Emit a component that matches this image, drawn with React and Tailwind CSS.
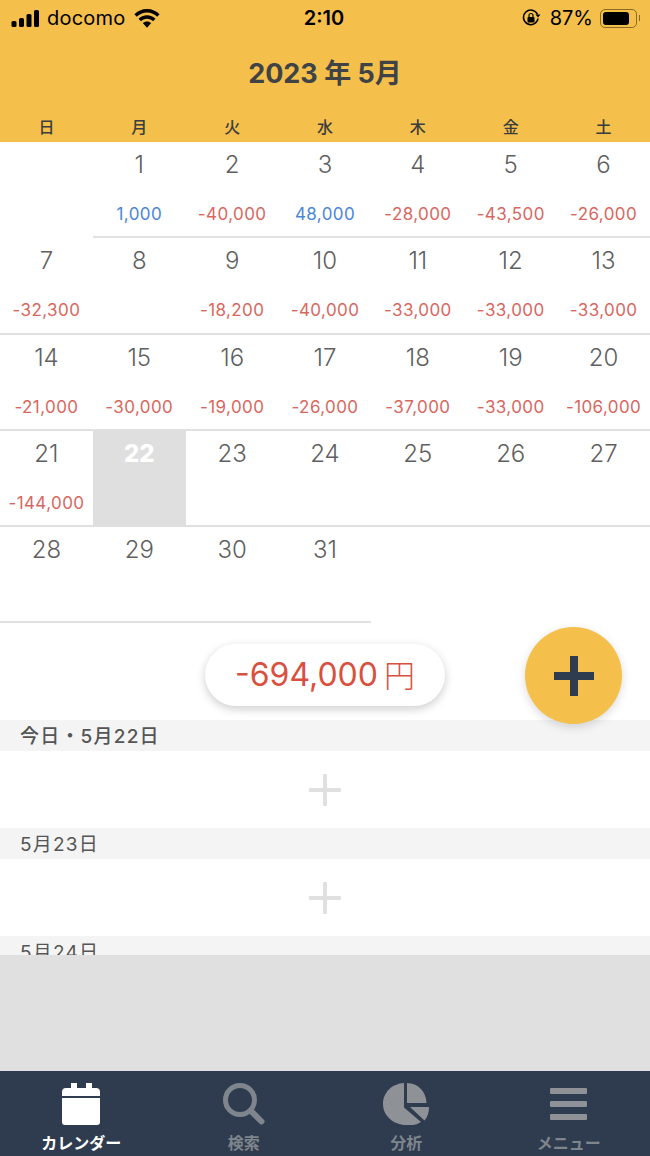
import React from 'react';

const weekdays = ['日', '月', '火', '水', '木', '金', '土'];

// null = blank cell, otherwise [day, amount]
const cells = [
  null, [1, '1,000'], [2, '-40,000'], [3, '48,000'], [4, '-28,000'], [5, '-43,500'], [6, '-26,000'],
  [7, '-32,300'], [8, ''], [9, '-18,200'], [10, '-40,000'], [11, '-33,000'], [12, '-33,000'], [13, '-33,000'],
  [14, '-21,000'], [15, '-30,000'], [16, '-19,000'], [17, '-26,000'], [18, '-37,000'], [19, '-33,000'], [20, '-106,000'],
  [21, '-144,000'], [22, ''], [23, ''], [24, ''], [25, ''], [26, ''], [27, ''],
  [28, ''], [29, ''], [30, ''], [31, ''], null, null, null,
];

const cjk = "font-['Inter','Noto_Sans_CJK_JP',sans-serif]";

function StatusBar() {
  return (
    <div className="flex h-[36px] items-center justify-between pl-[11px] pr-[10px] text-black">
      <div className="flex w-[200px] items-center">
        <svg width="30" height="18" viewBox="0 0 30 18" fill="currentColor">
          <rect x="0.5" y="12" width="5" height="6" rx="1.5" />
          <rect x="8" y="9" width="5" height="9" rx="1.5" />
          <rect x="15.5" y="5" width="5" height="13" rx="1.5" />
          <rect x="23" y="1" width="5" height="17" rx="1.5" />
        </svg>
        <span className="ml-[6px] text-[20px] leading-none tracking-[0.2px]">docomo</span>
        <svg className="ml-[9px]" width="26" height="19" viewBox="0 0 26 19" fill="currentColor">
          <path d="M13 0C8 0 3.6 2 .4 5.2l2.4 2.6C5.4 5.200 9 3.600 13 3.600s7.600 1.600 10.200 4.200l2.400-2.600C22.400 2 18 0 13 0z" />
          <path d="M13 6.200c-3.300 0-6.300 1.300-8.500 3.500l2.500 2.600c1.500-1.500 3.600-2.500 6-2.500s4.500 1 6 2.500l2.500-2.600c-2.200-2.200-5.200-3.500-8.500-3.500z" />
          <path d="M13 12.400c-1.700 0-3.100.7-4.200 1.700L13 18.800l4.200-4.700c-1.100-1-2.500-1.700-4.200-1.700z" />
        </svg>
      </div>
      <span className="-ml-[3px] text-[20px] font-semibold leading-none">2:10</span>
      <div className="flex w-[200px] items-center justify-end">
        <svg width="19" height="18" viewBox="0 0 19 18" fill="none">
          <path d="M15.500 5.500A7.300 7.300 0 1 0 16 9.500" stroke="currentColor" strokeWidth="1.600" />
          <path d="M13.500 5.500h5l-2.500 3z" fill="currentColor" />
          <rect x="5.500" y="8" width="7" height="5.500" rx="1" fill="currentColor" />
          <path d="M7 8V6.500a2 2 0 0 1 4 0V8" stroke="currentColor" strokeWidth="1.200" />
        </svg>
        <span className="ml-[9px] text-[20px] leading-none">87%</span>
        <div className="ml-[7px] flex h-[19px] w-[37px] items-center rounded-[5px] border border-[#8a6d22] p-[2px]">
          <div className="h-full w-[85%] rounded-[3px] bg-black" />
        </div>
        <div className="ml-[2px] h-[6px] w-[1px] bg-[#8a6d22]" />
      </div>
    </div>
  );
}

function DayCell({ cell }) {
  if (!cell) {
    return <div className="h-[96.300px]" />;
  }
  const [day, amount] = cell;
  const today = day === 22;
  const blue = amount !== '' && !amount.startsWith('-');
  return (
    <div className={`flex h-[96.300px] flex-col items-center border-b-2 border-[#e0e0e0] ${today ? 'bg-[#dfdfdf]' : ''}`}>
      <span className={`mt-[8px] h-[30px] text-[24px] leading-[30px] ${today ? 'font-extrabold text-white' : 'font-light text-[#5f5f5f]'}`}>{day}</span>
      <span className={`mt-[24px] whitespace-nowrap text-[17px] leading-[20px] tracking-[0.4px] ${blue ? 'text-[#4a86d6]' : 'text-[#d8675f]'}`}>{amount}</span>
    </div>
  );
}

function DayHeader({ label, bold }) {
  return (
    <div className={`flex h-[31px] shrink-0 items-center bg-[#f4f4f4] pl-[20px] pt-[3px] text-[19px] leading-none tracking-[1.2px] text-[#555555] ${bold ? 'font-medium' : ''}`}>
      {label}
    </div>
  );
}

function AddRow() {
  return (
    <div className="flex h-[77px] shrink-0 items-center justify-center bg-white pt-[1px]">
      <svg width="32" height="32" viewBox="0 0 32 32" fill="#e0e0e0">
        <rect x="14" y="0" width="4" height="32" rx="1" />
        <rect x="0" y="14" width="32" height="4" rx="1" />
      </svg>
    </div>
  );
}

function Tab({ label, active, children }) {
  return (
    <div className="flex flex-col items-center">
      <div className="mt-[12px] flex h-[42px] items-center justify-center">{children}</div>
      <span className={`mt-[8px] text-[16px] font-bold leading-[20px] ${active ? 'text-white' : 'text-[#7f858c]'}`}>{label}</span>
    </div>
  );
}

export default function App() {
  return (
    <div className={`relative flex h-[1156px] w-[650px] flex-col overflow-hidden bg-[#e0e0e0] ${cjk}`}>
      {/* Header */}
      <header className="h-[142px] shrink-0 bg-[#f5bf4b]">
        <StatusBar />
        <h1 className="mt-[19px] text-center text-[27px] font-bold leading-[38px] text-[#3f4346]">2023 年 5月</h1>
        <div className="mt-[22px] grid grid-cols-7">
          {weekdays.map((d) => (
            <span key={d} className="text-center text-[16px] font-medium leading-[24px] text-[#3a3d3f]">{d}</span>
          ))}
        </div>
      </header>

      {/* Calendar + list, clipped above the grey block */}
      <div className="h-[813px] shrink-0 overflow-hidden bg-white">
        <div className="grid grid-cols-7">
          {cells.map((c, i) => (
            <DayCell key={i} cell={c} />
          ))}
        </div>
        <div className="flex h-[96.500px] items-start justify-center pt-[21px]">
          <div className="flex h-[62px] w-[240px] items-center justify-center rounded-full bg-white text-[32px] leading-none text-[#d9503f] shadow-[0_3px_10px_rgba(0,0,0,0.2)]">
            -694,000<span className="ml-[6px] text-[31px] font-light">円</span>
          </div>
        </div>
        <DayHeader label="今日・5月22日" bold />
        <AddRow />
        <DayHeader label="5月23日" />
        <AddRow />
        <DayHeader label="5月24日" />
      </div>

      {/* Floating add button */}
      <button className="absolute left-[525px] top-[627px] flex h-[97px] w-[97px] items-center justify-center rounded-full bg-[#f5bf4b] shadow-[0_3px_10px_rgba(0,0,0,0.15)]">
        <svg width="40" height="40" viewBox="0 0 40 40" fill="#2f3c4f">
          <rect x="16" y="0" width="8" height="40" />
          <rect x="0" y="16" width="40" height="8" />
        </svg>
      </button>

      <div className="flex-1" />

      {/* Tab bar */}
      <nav className="grid h-[85px] shrink-0 grid-cols-4 bg-[#2f3c4f]">
        <Tab label="カレンダー" active>
          <svg width="38" height="42" viewBox="0 0 38 42" fill="#ffffff">
            <path d="M9 0h6v5h9V0h6v5h4a4 4 0 0 1 4 4v4H0V9a4 4 0 0 1 4-4h5z" />
            <path d="M0 15h38v24a3 3 0 0 1-3 3H3a3 3 0 0 1-3-3z" />
          </svg>
        </Tab>
        <Tab label="検索">
          <svg width="42" height="42" viewBox="0 0 42 42" fill="none" stroke="#7f858c">
            <circle cx="17" cy="17" r="14.500" strokeWidth="5" />
            <path d="M28 28l10.500 10.500" strokeWidth="6" strokeLinecap="round" />
          </svg>
        </Tab>
        <Tab label="分析">
          <svg width="46" height="42" viewBox="0 0 46 42" fill="#8e9195">
            <path d="M21 0v24.500l17 14.500A21.500 21.500 0 0 1 23 42C10.500 42 0 32.500 0 21 0 9.500 9 .5 21 0z" />
            <path d="M24 0c11 0 19 8.500 19.500 20H24z" />
            <path d="M27 24h19c0 5.500-1.500 10-4.500 13.500z" />
          </svg>
        </Tab>
        <Tab label="メニュー">
          <svg width="37" height="32" viewBox="0 0 37 32" fill="#8e9195">
            <rect x="0" y="0" width="37" height="6" rx="1" />
            <rect x="0" y="13" width="37" height="6" rx="1" />
            <rect x="0" y="26" width="37" height="6" rx="1" />
          </svg>
        </Tab>
      </nav>
    </div>
  );
}
